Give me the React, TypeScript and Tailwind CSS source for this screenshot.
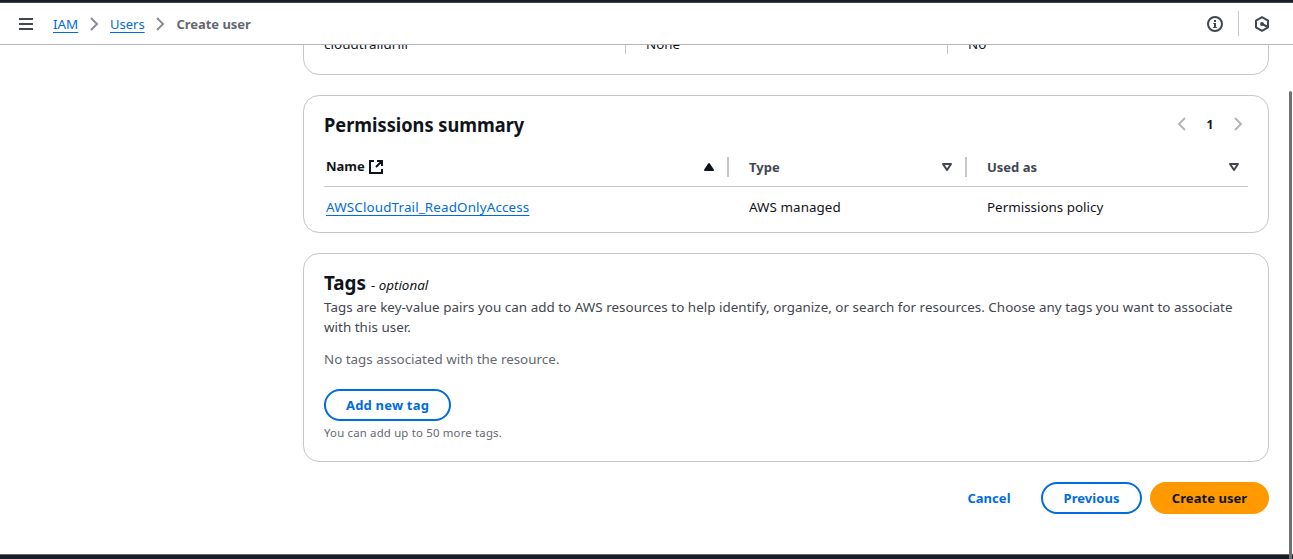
import type { ReactNode } from "react";

function Card({ className = "", children }: { className?: string; children: ReactNode }) {
  return (
    <section className={`shrink-0 rounded-2xl border border-[#c6c6cd] bg-white px-5 ${className}`}>{children}</section>
  );
}

function Chevron({ left = false, className = "" }: { left?: boolean; className?: string }) {
  return (
    <svg viewBox="0 0 16 16" className={`size-4 shrink-0 fill-none stroke-2 ${className}`}>
      <path d={left ? "M11 2 5 8l6 6" : "m5 2 6 6-6 6"} />
    </svg>
  );
}

function SortIcon() {
  return (
    <svg viewBox="0 0 16 16" className="size-4 shrink-0 fill-none stroke-[#424650] stroke-2">
      <path d="M4 5h8l-4 6-4-6Z" strokeLinejoin="round" />
    </svg>
  );
}

function Header() {
  return (
    <header className="flex h-[42px] shrink-0 items-center border-b border-[#b6b6bd] bg-white pr-[23px] pl-[18px]">
      <svg viewBox="0 0 16 16" className="size-4 shrink-0 stroke-[#424650] stroke-2">
        <path d="M1 3h14M1 8h14M1 13h14" />
      </svg>
      <nav className="ml-[19px] flex items-center text-[13px] leading-5">
        <a className="w-[25px] text-[13.4px] text-[#006ce0] underline decoration-1 underline-offset-3">IAM</a>
        <Chevron className="mx-2 stroke-[#8c8c94]" />
        <a className="w-[34px] text-[#006ce0] underline decoration-1 underline-offset-3">Users</a>
        <Chevron className="mx-2 stroke-[#8c8c94]" />
        <span className="pl-[0.5px] font-bold tracking-[-0.05px] text-[#656871]">Create user</span>
      </nav>
      <div className="ml-auto flex items-center">
        <svg viewBox="0 0 16 16" className="size-4 fill-none stroke-[#424650] stroke-2">
          <circle cx="8" cy="8" r="7" />
          <path d="M8 4v2M8 7v5" />
          <path d="M6.2 7.5H8M6.2 11.5h3.6" strokeWidth="1" />
        </svg>
        <div className="mr-[15px] ml-[15px] h-[25px] w-px bg-[#c6c6cd]" />
        <svg viewBox="0 0 16 16" className="size-4 fill-none stroke-[#424650] stroke-2">
          <path d="m8 1.2 6 3.4v6.8l-6 3.4-6-3.4V4.6l6-3.4Z" strokeLinejoin="round" />
          <circle cx="8" cy="8" r="1.2" className="fill-[#424650]" strokeWidth="1.6" />
          <path d="m8 8 5 2.5" />
        </svg>
      </div>
    </header>
  );
}

function UserDetails() {
  return (
    <Card className="flex h-[75px] items-start text-[13.4px]">
      <div className="flex h-[53px] w-[302px] items-end border-r border-[#c6c6cd]">
        <span className="leading-5 tracking-[0.05px]">cloudtraildrill</span>
      </div>
      <div className="flex h-[53px] w-[322px] items-end border-r border-[#c6c6cd] pl-5">
        <span className="leading-5">None</span>
      </div>
      <div className="flex h-[53px] items-end pl-5">
        <span className="leading-5">No</span>
      </div>
    </Card>
  );
}

function Permissions() {
  return (
    <Card className="mt-5 h-[138px]">
      <div className="flex h-[60px] items-center justify-between pb-[3px]">
        <h2 className="origin-left scale-x-[0.91] text-xl leading-6 font-bold">Permissions summary</h2>
        <div className="flex items-center pr-[2px] pb-px text-xs font-bold">
          <Chevron left className="stroke-[#b4b4bb]" />
          <span className="w-10 pt-px text-center">1</span>
          <Chevron className="stroke-[#b4b4bb]" />
        </div>
      </div>
      <div className="grid h-[31px] grid-cols-[405px_238px_281px] border-b border-[#c6c6cd] pt-px text-[13px] leading-5 font-bold text-[#424650]">
        <div className="flex h-5 items-center border-r-2 border-[#c6c6cd] pr-2.5 pl-0.5 text-[#0f141a]">
          <span className="pb-0.5">Name</span>
          <svg viewBox="0 0 16 16" className="ml-[3px] size-4 fill-none stroke-[#0f141a] stroke-2">
            <path d="M6 2H2v12h12v-4M9 2h5v5M14 2 8 8" />
          </svg>
          <svg viewBox="0 0 16 16" className="ml-auto size-4 fill-[#0f141a] stroke-[#0f141a] stroke-2">
            <path d="M4 11h8L8 5l-4 6Z" strokeLinejoin="round" />
          </svg>
        </div>
        <div className="flex h-5 items-center justify-between border-r-2 border-[#c6c6cd] pr-2.5 pl-5">
          Type
          <SortIcon />
        </div>
        <div className="flex h-5 items-center justify-between pr-[6px] pl-5">
          Used as
          <SortIcon />
        </div>
      </div>
      <div className="grid h-10 grid-cols-[405px_238px_281px] items-center text-[13.4px] leading-5">
        <a className="ml-0.5 justify-self-start tracking-[0.15px] text-[#006ce0] underline decoration-1 underline-offset-3">
          AWSCloudTrail_ReadOnlyAccess
        </a>
        <span className="pl-5 tracking-[0.05px]">AWS managed</span>
        <span className="pl-5">Permissions policy</span>
      </div>
    </Card>
  );
}

function Tags() {
  return (
    <Card className="mt-5 h-[209px] pt-[17px]">
      <h2 className="flex h-6 items-baseline text-xl leading-6 font-bold">
        <span className="w-[47px] origin-left scale-x-[0.94]">Tags</span>
        <span className="text-[13.4px] font-normal italic">- optional</span>
      </h2>
      <p className="mt-0.5 text-[13.4px] leading-5 tracking-[0.035px] text-[#424650]">
        Tags are key-value pairs you can add to AWS resources to help identify, organize, or search for resources. Choose
        any tags you want to associate with this user.
      </p>
      <p className="mt-3 text-[13.4px] leading-5 text-[#656871]">No tags associated with the resource.</p>
      <button className="mt-5 flex h-8 w-[127px] items-center justify-center rounded-full border-2 border-[#006ce0] pt-px font-bold tracking-[0.2px] text-[#006ce0]">
        Add new tag
      </button>
      <p className="mt-1 text-[11.4px] leading-4 tracking-[0.18px] text-[#656871]">You can add up to 50 more tags.</p>
    </Card>
  );
}

export default function App() {
  return (
    <div className="relative flex h-[559px] w-[1293px] flex-col overflow-hidden bg-white font-['Noto_Sans',sans-serif] text-[13px] text-[#0f141a]">
      <div className="h-[3px] shrink-0 border-b border-[#424650] bg-[#161d26]" />
      <Header />
      <main className="flex min-h-0 flex-1 flex-col overflow-hidden pr-6 pl-[303px]">
        <div className="-mt-[45px] flex flex-col">
          <UserDetails />
          <Permissions />
          <Tags />
          <div className="mt-5 flex items-center justify-end gap-2 font-bold tracking-[0.05px]">
            <button className="h-8 w-[88px] pt-px text-[#006ce0]">Cancel</button>
            <button className="h-8 w-[101px] rounded-full border-2 border-[#006ce0] pt-0.5 text-[#006ce0]">Previous</button>
            <button className="h-8 w-[119px] rounded-full bg-[#ff9900] pt-px">Create user</button>
          </div>
        </div>
      </main>
      <footer className="h-[5px] shrink-0 border-t border-[#656871] bg-[#161d26]" />
      <div className="absolute top-[91px] right-px bottom-0 w-[3px] rounded-t-sm bg-[#717171]" />
    </div>
  );
}
